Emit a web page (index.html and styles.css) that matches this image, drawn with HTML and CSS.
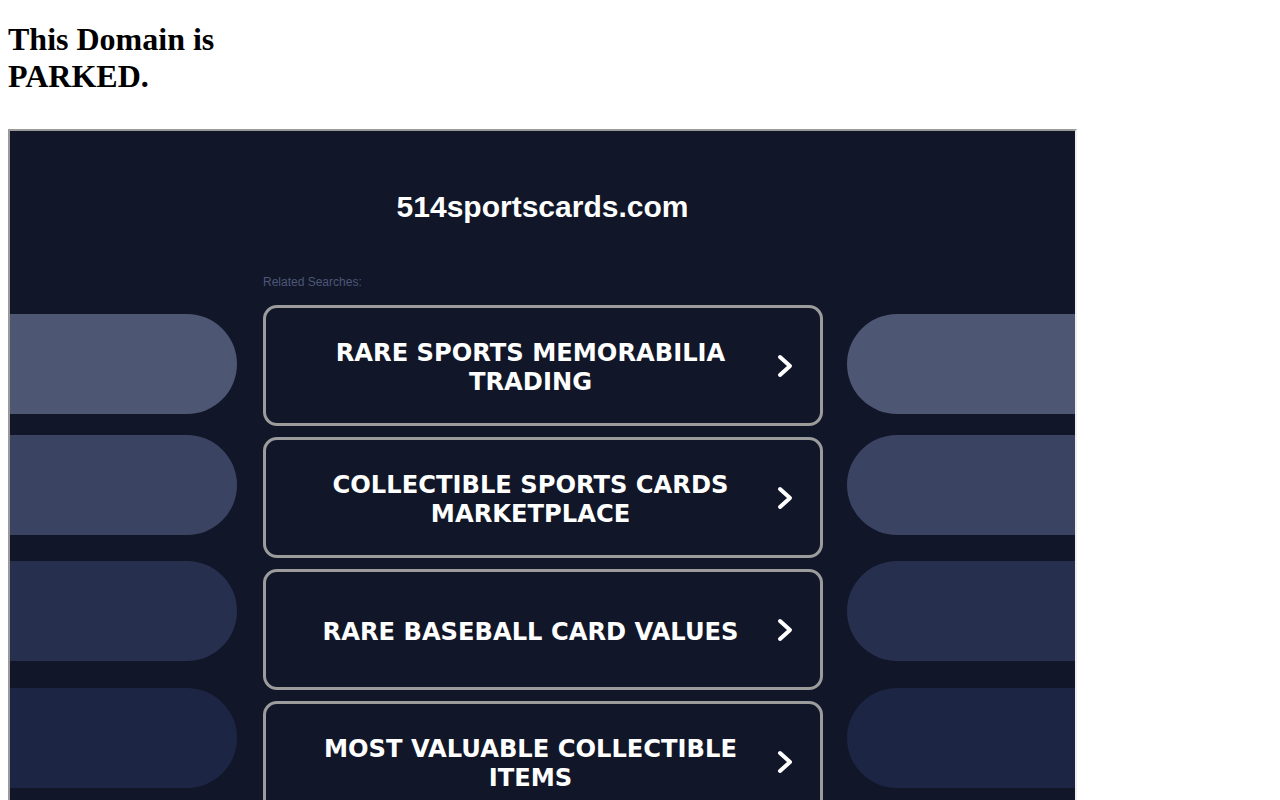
FILE: index.html
```html
<!DOCTYPE html>
<html>
<head>
<meta charset="utf-8">
<title>This Domain is PARKED.</title>
<link rel="stylesheet" href="styles.css">
</head>
<body>
<h1 class="notice">This Domain is PARKED.</h1>
<div class="frame">
  <div class="site-title">514sportscards.com</div>
  <div class="layout">
    <div class="pills pills-left">
      <div class="pill pill-1"></div>
      <div class="pill pill-2"></div>
      <div class="pill pill-3"></div>
      <div class="pill pill-4"></div>
    </div>
    <div class="center">
      <div class="related">Related Searches:</div>
      <div class="links">
        <a class="link" href="#"><span class="link-text">RARE SPORTS MEMORABILIA TRADING</span><span class="chev"><svg width="16" height="24" viewBox="0 0 16 24"><polyline points="3,3 13,12 3,21" fill="none" stroke="#fff" stroke-width="4" stroke-linecap="round" stroke-linejoin="round"/></svg></span></a>
        <a class="link" href="#"><span class="link-text">COLLECTIBLE SPORTS CARDS MARKETPLACE</span><span class="chev"><svg width="16" height="24" viewBox="0 0 16 24"><polyline points="3,3 13,12 3,21" fill="none" stroke="#fff" stroke-width="4" stroke-linecap="round" stroke-linejoin="round"/></svg></span></a>
        <a class="link" href="#"><span class="link-text">RARE BASEBALL CARD VALUES</span><span class="chev"><svg width="16" height="24" viewBox="0 0 16 24"><polyline points="3,3 13,12 3,21" fill="none" stroke="#fff" stroke-width="4" stroke-linecap="round" stroke-linejoin="round"/></svg></span></a>
        <a class="link" href="#"><span class="link-text">MOST VALUABLE COLLECTIBLE ITEMS</span><span class="chev"><svg width="16" height="24" viewBox="0 0 16 24"><polyline points="3,3 13,12 3,21" fill="none" stroke="#fff" stroke-width="4" stroke-linecap="round" stroke-linejoin="round"/></svg></span></a>
      </div>
    </div>
    <div class="pills pills-right">
      <div class="pill pill-1"></div>
      <div class="pill pill-2"></div>
      <div class="pill pill-3"></div>
      <div class="pill pill-4"></div>
    </div>
  </div>
</div>
</body>
</html>
```
FILE: styles.css
```css
html, body {
  background: #ffffff;
}
body {
  margin: 0 8px;
  padding: 0;
  font-family: "Liberation Serif", "Times New Roman", serif;
  overflow: hidden;
}
.notice {
  width: 220px;
  font-size: 32px;
  font-weight: bold;
  margin: 21.44px 0;
  color: #000;
}
.frame {
  margin-top: 34px;
  width: 1065px;
  height: 900px;
  background: #111729;
  border-style: solid;
  border-width: 2px;
  border-color: #9a9a9a #eeeeee #eeeeee #9a9a9a;
  overflow: hidden;
}
.site-title {
  margin-top: 58px;
  height: 36px;
  line-height: 36px;
  text-align: center;
  font-family: "Liberation Sans", Arial, sans-serif;
  font-weight: bold;
  font-size: 30px;
  color: #ffffff;
}
.layout {
  display: grid;
  grid-template-columns: 229px 560px 1fr;
  column-gap: 24px;
}
.pills {
  padding-top: 89px;
  display: flex;
  flex-direction: column;
}
.pill {
  height: 100px;
}
.pills-left .pill {
  width: 227px;
  border-radius: 0 50px 50px 0;
}
.pills-right .pill {
  border-radius: 50px 0 0 50px;
}
.pill-1 { background: #4d5673; }
.pill-2 { background: #3b4363; margin-top: 21px; }
.pill-3 { background: #262f4e; margin-top: 26px; }
.pill-4 { background: #1d2545; margin-top: 27px; }
.center {
  padding-top: 50px;
}
.related {
  font-family: "Liberation Sans", Arial, sans-serif;
  font-size: 12px;
  line-height: 14px;
  color: #4d5677;
  margin-bottom: 16px;
}
.links {
  display: flex;
  flex-direction: column;
  gap: 11px;
}
.link {
  display: flex;
  align-items: center;
  height: 115px;
  border: 3px solid #9c9c9c;
  border-radius: 14px;
  padding: 0 20px 0 25px;
  text-decoration: none;
  color: #ffffff;
}
.link-text {
  flex: 1;
  padding-top: 5px;
  text-align: center;
  font-family: "DejaVu Sans", Verdana, sans-serif;
  font-weight: bold;
  font-size: 24.2px;
  line-height: 29px;
}
.chev {
  width: 30px;
  display: flex;
  justify-content: center;
  align-items: center;
}
.chev svg {
  display: block;
}
```
